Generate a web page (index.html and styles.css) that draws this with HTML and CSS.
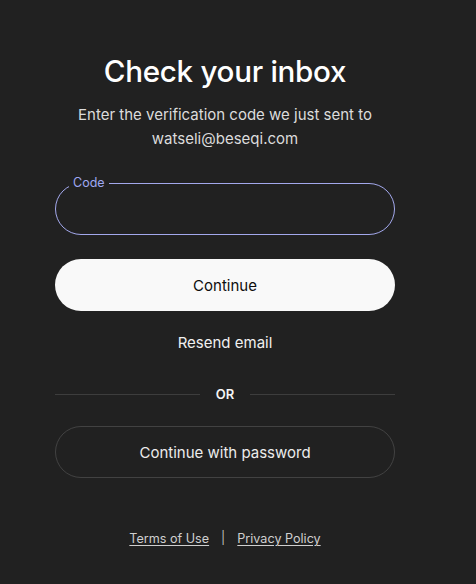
FILE: index.html
```html
<!DOCTYPE html>
<html lang="en">
<head>
<meta charset="utf-8">
<title>Check your inbox</title>
<link rel="stylesheet" href="styles.css">
</head>
<body>
<main class="card">
  <h1 class="title">Check your inbox</h1>
  <p class="subtitle">Enter the verification code we just sent to watseli@beseqi.com</p>

  <div class="field">
    <label class="field-label" for="code">Code</label>
    <input class="field-input" id="code" type="text">
  </div>

  <button class="btn btn-primary">Continue</button>
  <button class="btn-link">Resend email</button>

  <div class="divider"><span class="divider-line"></span><span class="divider-text">OR</span><span class="divider-line"></span></div>

  <button class="btn btn-outline">Continue with password</button>

  <footer class="footer">
    <a href="#" class="footer-link">Terms of Use</a>
    <span class="footer-sep">|</span>
    <a href="#" class="footer-link">Privacy Policy</a>
  </footer>
</main>
</body>
</html>
```

FILE: styles.css
```css
html, body {
  margin: 0;
  background: #212121;
}

body {
  font-family: Inter, "Noto Sans", sans-serif;
  color: #ececec;
}

.card {
  width: 340px;
  margin-left: 55px;
  padding-top: 52px;
  display: flex;
  flex-direction: column;
  align-items: stretch;
  text-align: center;
}

.title {
  margin: 0;
  font-size: 29.6px;
  line-height: 38px;
  font-weight: 500;
  letter-spacing: -0.3px;
  color: #ffffff;
}

.subtitle {
  margin: 13px 12px 0;
  font-size: 15px;
  line-height: 24px;
  color: #dcdcdc;
}

.field {
  position: relative;
  margin-top: 32px;
  height: 52px;
}

.field-input {
  box-sizing: border-box;
  width: 100%;
  height: 52px;
  border: 1px solid #a3a8ec;
  border-radius: 26px;
  background: transparent;
  outline: none;
  color: #ececec;
  font: inherit;
  padding: 0 20px;
}

.field-label {
  position: absolute;
  top: -8px;
  left: 14px;
  padding: 0 4px;
  background: #212121;
  font-size: 12.5px;
  line-height: 16px;
  color: #9fa8f2;
}

.btn {
  box-sizing: border-box;
  height: 52px;
  border-radius: 26px;
  font-family: inherit;
  font-size: 15px;
  cursor: pointer;
}

.btn-primary {
  margin-top: 24px;
  border: none;
  background: #f9f9f9;
  color: #0d0d0d;
}

.btn-link {
  margin-top: 20px;
  align-self: center;
  border: none;
  background: none;
  padding: 0;
  font-family: inherit;
  font-size: 15px;
  line-height: 24px;
  color: #f0f0f0;
  cursor: pointer;
}

.divider {
  margin-top: 27px;
  display: flex;
  align-items: center;
  gap: 16px;
  height: 24px;
}

.divider-line {
  flex: 1;
  height: 1px;
  background: #3d3d3d;
}

.divider-text {
  font-size: 13px;
  font-weight: 600;
  color: #f5f5f5;
}

.btn-outline {
  margin-top: 20px;
  border: 1px solid #424242;
  background: transparent;
  color: #ececec;
}

.footer {
  margin-top: 50px;
  display: flex;
  justify-content: center;
  align-items: center;
  gap: 12px;
  font-size: 12.6px;
  line-height: 20px;
}

.footer-link {
  color: #cfcfcf;
  text-decoration: underline;
  text-underline-offset: 2px;
}

.footer-sep {
  color: #bdbdbd;
  padding-bottom: 2px;
}
```
